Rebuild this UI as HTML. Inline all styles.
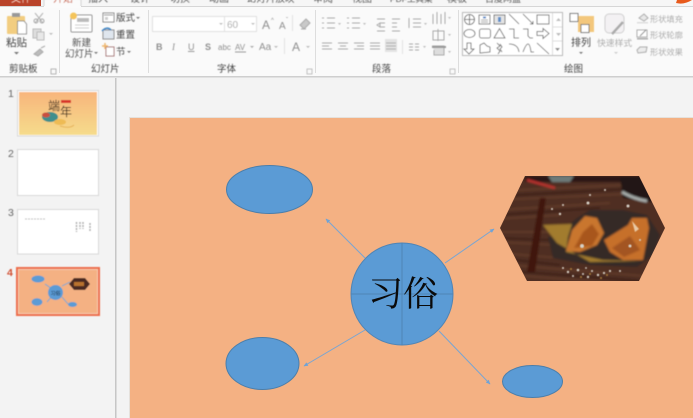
<!DOCTYPE html>
<html><head><meta charset="utf-8"><style>
html,body{margin:0;padding:0;width:693px;height:418px;overflow:hidden;background:#f3f3f3}
svg{display:block}
text{font-family:"Liberation Sans","Noto Sans CJK SC",sans-serif;fill:#5a5a5a;font-size:10px}
.g{fill:#8f8f8f}
.lg{fill:#adadad}
.i{fill:none;stroke:#a5a5a5;stroke-width:1}
.s{fill:none;stroke:#555;stroke-width:.8}
</style></head><body>
<svg width="693" height="418" viewBox="0 0 693 418" xmlns="http://www.w3.org/2000/svg">
<defs>
<clipPath id="hex"><polygon points="500,228 525,176 639,176 665,228 639,281 527,281"/></clipPath>
<linearGradient id="th" x1="0" y1="0" x2="0" y2="1"><stop offset="0" stop-color="#f8b57c"/><stop offset="1" stop-color="#f6dc8c"/></linearGradient>
<marker id="a" markerWidth="5" markerHeight="5" refX="4" refY="2.500" orient="auto"><path d="M0 0.500L4.500 2.500L0 4.500Z" fill="#6fa3d6"/></marker>
<filter id="b"><feGaussianBlur stdDeviation="0.45"/></filter>
<filter id="b2"><feGaussianBlur stdDeviation="1"/></filter>
<filter id="b3"><feGaussianBlur stdDeviation="0.4"/></filter>
</defs>

<rect width="693" height="418" fill="#f3f3f3"/>
<!-- top tabs -->
<rect width="693" height="7" fill="#f6f6f6"/>
<rect x="0" y="0" width="41" height="7" fill="#b9432a"/>
<g filter="url(#b)">
<text x="11" y="2" style="fill:#f6d9cf">文件</text>
<rect x="44" y="-1" width="37" height="9" fill="#fbfbfb" stroke="#d2d2d2"/>
<text x="53" y="2" style="fill:#c8502f">开始</text>
<text x="88" y="2">插入</text><text x="130" y="2">设计</text><text x="170" y="2">切换</text><text x="209" y="2">动画</text>
<text x="247" y="2" style="font-size:9.500px">幻灯片放映</text><text x="313" y="2">审阅</text><text x="352" y="2">视图</text>
<text x="390" y="2" style="font-size:8.500px">PDF工具集</text><text x="447" y="2">模板</text><text x="485" y="2" style="font-size:9px">百度网盘</text>
</g>
<path d="M676 3Q684 5 692 0L684 0L677 0Z" fill="#e85a1c"/>
<!-- ribbon -->
<rect x="0" y="7" width="693" height="69" fill="#fafafa"/>
<rect x="0" y="6" width="44" height="1" fill="#d6d6d6"/><rect x="81" y="6" width="612" height="1" fill="#d6d6d6"/>
<rect x="44" y="6" width="37" height="2" fill="#fbfbfb"/>
<rect x="0" y="76" width="693" height="1.500" fill="#cfcfcf"/>
<g fill="#dddddd"><rect x="59" y="10" width="1" height="63"/><rect x="148" y="10" width="1" height="63"/><rect x="315" y="10" width="1" height="63"/><rect x="458" y="10" width="1" height="63"/></g>

<g filter="url(#b)">
<!-- clipboard -->
<rect x="7" y="16" width="18" height="18" rx="1" fill="#f2cd80"/>
<rect x="12" y="13" width="8" height="4" fill="#999"/>
<path d="M17.500 21H24L26.500 24V34H17.500Z" fill="#fff" stroke="#777" stroke-width=".8"/>
<text x="6" y="46" style="font-size:10.500px;fill:#444">粘贴</text>
<path d="M14 52h5l-2.500 2.500Z" fill="#777"/>
<path d="M35 13L43 23M43 13L35 23" stroke="#aaa" fill="none"/><circle cx="36" cy="21" r="2" class="i"/><circle cx="42" cy="21" r="2" class="i"/>
<rect x="33" y="29" width="8" height="9" fill="#ddd" stroke="#bbb"/><rect x="37" y="32" width="7" height="8" fill="#e8e8e8" stroke="#bbb"/><path d="M49 33h4l-2 2Z" fill="#bbb"/>
<path d="M34 54L40 49L43 52L38 56ZM41 48L45 46" stroke="#aaa" fill="#bbb"/>
<text x="9" y="72" style="font-size:9.500px;fill:#444">剪贴板</text>
<rect x="51" y="69" width="5" height="5" fill="none" stroke="#999" stroke-width=".7"/>

<!-- slides group -->
<rect x="71" y="15" width="21" height="17" rx="1" fill="#fff" stroke="#8f8f8f"/>
<rect x="77" y="18" width="12" height="4" fill="#bbb"/><path d="M75 25h14M75 28h14" stroke="#ccc"/>
<circle cx="73.500" cy="16" r="3.500" fill="#f4c45a"/>
<text x="72" y="46" style="font-size:9.500px;fill:#555">新建</text>
<text x="65" y="57" style="font-size:9.500px;fill:#555">幻灯片</text><path d="M94 52h4l-2 2Z" fill="#777"/>
<rect x="103" y="13" width="11" height="9" fill="#fff" stroke="#8a8a8a"/><path d="M104 15h9" stroke="#8a8a8a"/><rect x="105" y="17" width="3" height="3" fill="#ccc"/>
<text x="116" y="21" style="font-size:9.500px;fill:#444">版式</text><path d="M136 17h4l-2 2Z" fill="#777"/>
<rect x="103" y="30" width="11" height="9" fill="#dfe6ee" stroke="#8a8a8a"/><path d="M102 31Q107 26 111 30" stroke="#3f87c6" stroke-width="1.500" fill="none"/>
<text x="116" y="38" style="font-size:9.500px;fill:#444">重置</text>
<rect x="106" y="47" width="8" height="9" fill="#fff" stroke="#a77"/><path d="M102 46h6M105 43v6" stroke="#efb56c" stroke-width="1.500"/>
<text x="116" y="55" style="font-size:9.500px;fill:#444">节</text><path d="M127 51h4l-2 2Z" fill="#777"/>
<text x="91" y="72" style="font-size:9.500px;fill:#444">幻灯片</text>

<!-- font group -->
<rect x="152.500" y="16.500" width="72" height="15" fill="#fff" stroke="#e0e0e0"/>
<rect x="224.500" y="16.500" width="32" height="15" fill="#fff" stroke="#e0e0e0"/>
<path d="M219 23h4l-2 2ZM251 23h4l-2 2Z" fill="#bbb"/>
<text x="227" y="28" style="font-size:10px;fill:#aaa">60</text>
<text x="262" y="29" style="font-size:12px" class="g">A</text><text x="279" y="29" style="font-size:10px" class="g">A</text>
<text x="271" y="22" style="font-size:6px" class="g">^</text><text x="286" y="22" style="font-size:6px" class="g">ˇ</text>
<rect x="292" y="15" width="1" height="16" fill="#e2e2e2"/>
<path d="M300 25L306 19L310 23L304 29ZM306 29H301" stroke="#aaa" fill="#c9c9c9"/>
<text x="156" y="50" style="font-size:9px;font-weight:bold" class="g">B</text>
<text x="172" y="50" style="font-size:9px;font-style:italic;font-family:'Liberation Serif',serif" class="g">I</text>
<text x="188" y="50" style="font-size:9px;text-decoration:underline" class="g">U</text>
<text x="205" y="50" style="font-size:9px;font-weight:bold" class="g">S</text>
<text x="218" y="50" style="font-size:8px" class="g">abc</text>
<text x="235" y="50" style="font-size:8px" class="g">AV</text><path d="M235 52h11" stroke="#999"/><path d="M250 46h4l-2 2Z" fill="#aaa"/>
<text x="259" y="50" style="font-size:10px" class="g">Aa</text><path d="M274 46h4l-2 2Z" fill="#bbb"/>
<rect x="284" y="38" width="1" height="16" fill="#e2e2e2"/>
<text x="292" y="51" style="font-size:12px" class="g">A</text><path d="M306 46h4l-2 2Z" fill="#bbb"/>
<text x="217" y="72" style="font-size:9.500px;fill:#444">字体</text>
<rect x="307" y="69" width="5" height="5" fill="none" stroke="#aaa" stroke-width=".7"/>

<!-- paragraph -->
<g stroke="#aaa" fill="none">
<path d="M327 18h8M327 23h8M327 28h8M322 18h2M322 23h2M322 28h2"/>
<path d="M352 18h8M352 23h8M352 28h8M347 18h2M347 23h2M347 28h2"/>
<path d="M377 19h8M380 23h5M380 27h5M377 31h8M377 25l3-2v4Z"/>
<path d="M392 19h8M392 23h5M392 27h5M392 31h8"/>
<path d="M413 19h8M413 23h8M413 27h8M409 18v10"/>
<path d="M433 14v10M437 12v12M441 14v10M445 12v12"/>
<rect x="433" y="31" width="11" height="9"/><path d="M438 29v12"/>
<path d="M322 43h10M322 46h7M322 49h10"/><path d="M338 43h10M340 46h6M338 49h10"/><path d="M354 43h10M357 46h7M354 49h10"/><path d="M370 43h10M370 46h10M370 49h10"/>
</g>
<rect x="385" y="39" width="12" height="13" fill="#e3e3e3"/><path d="M386 43h10M386 46h10M386 49h10" stroke="#aaa"/>
<rect x="402" y="40" width="1" height="14" fill="#e2e2e2"/>
<path d="M409 44h4M415 44h4M409 47h4M415 47h4M409 50h4M415 50h4" stroke="#aaa"/>
<path d="M432 46h12v9h-10v-5" fill="#ddd" stroke="#aaa"/><path d="M432 47L446 47" stroke="#999" stroke-width="2"/>
<g fill="#bbb"><path d="M338 23h3l-1.500 2ZM363 23h3l-1.500 2ZM424 23h3l-1.500 2ZM448 17h3l-1.500 2ZM448 34h3l-1.500 2ZM423 46h3l-1.500 2ZM448 51h3l-1.500 2Z"/></g>
<text x="372" y="72" style="font-size:9.500px;fill:#444">段落</text>
<rect x="450" y="69" width="5" height="5" fill="none" stroke="#aaa" stroke-width=".7"/>

<!-- gallery -->
<rect x="462.500" y="12.500" width="100" height="43" fill="#fff" stroke="#b8b8b8"/>
<path d="M552.500 13V55M552.500 27H562M552.500 41H562" stroke="#dcdcdc"/>
<path d="M556 21h5l-2.500-3ZM556 33h5l-2.500 3Z" fill="#bbb"/><path d="M555 46h5M555 48h5l-2.500 3Z" fill="#888"/>
<g class="s">
<circle cx="469.500" cy="19.500" r="5"/><path d="M469.500 14.500v10M464.500 19.500h10"/>
<rect x="479" y="15" width="11" height="9"/><path d="M481 20h7M481 22h7" stroke="#888"/><rect x="483" y="16.500" width="3" height="2" fill="#5b8ec9" stroke="none"/>
<rect x="494" y="15" width="11" height="9" fill="#e4e4e4"/><rect x="498" y="17" width="3" height="5" fill="#5b8ec9" stroke="none"/>
<path d="M509 14L519 24M523 14L533 24M530 24h3v-3"/>
<rect x="537" y="15" width="12" height="9"/>
<ellipse cx="469.500" cy="33.500" rx="5.500" ry="4"/>
<rect x="479.500" y="29" width="11" height="9" rx="2"/>
<path d="M494 38L499.500 28.500L505 38Z"/>
<path d="M509 29h5v9h5"/><path d="M523 29h5v7l2 2h3"/>
<path d="M537 31.500h6v-3l6 5-6 5v-3h-6Z"/>
<path d="M467 43v6h-3l5 5 5-5h-3v-6Z"/>
<path d="M480 45l4-2 3 3 3 1 0 5-10 1Z"/>
<path d="M497 43l3 3-3 2 3 3-2 3M500 44l2 3-2 2 2 3"/>
<path d="M509 44q9 0 10 8"/><path d="M523 52q3-8 5-8t3 8h3"/><path d="M537 43L549 54"/>
</g>

<!-- arrange -->
<rect x="578" y="16" width="16" height="16" fill="#f3c77c"/>
<rect x="570" y="13.500" width="8" height="8" fill="#fff" stroke="#777"/>
<rect x="581" y="24.500" width="8" height="8" fill="#fff" stroke="#777"/>
<text x="571" y="46" style="font-size:10px;fill:#444">排列</text><path d="M579 52h4l-2 2Z" fill="#777"/>
<!-- quick styles -->
<rect x="605" y="14" width="19" height="19" rx="4" fill="#f3f1f3" stroke="#cfcfcf"/>
<path d="M612 34L623 22" stroke="#aaa" stroke-width="2.500"/>
<text x="597" y="46" style="font-size:8.800px" class="lg">快速样式</text><path d="M614 52h4l-2 2Z" fill="#ccc"/>
<!-- shape opts -->
<path d="M639 18l5-4 4 4-4 3Z" fill="#e8e8e8" stroke="#aaa"/><rect x="637" y="22" width="11" height="1.500" fill="#ddd"/>
<text x="650" y="22" style="font-size:8.200px" class="lg">形状填充</text>
<rect x="637" y="30" width="10" height="7" fill="#fff" stroke="#aaa"/><path d="M640 36l6-6" stroke="#888"/><rect x="637" y="38" width="11" height="1.500" fill="#aaa"/>
<text x="650" y="38" style="font-size:8.200px" class="lg">形状轮廓</text>
<path d="M637 50l3-3h7l-1 5-8 1Z" fill="#ececec" stroke="#aaa"/>
<text x="650" y="55" style="font-size:8.200px" class="lg">形状效果</text>
<text x="564" y="72" style="font-size:9.500px;fill:#444">绘图</text>
</g>

<!-- left panel -->
<rect x="115" y="78" width="1.500" height="340" fill="#c6c6c6"/>
<g filter="url(#b)">
<text x="8" y="97" style="font-size:10.500px;fill:#666">1</text>
<text x="8" y="157" style="font-size:10.500px;fill:#666">2</text>
<text x="8" y="216" style="font-size:10.500px;fill:#666">3</text>
<text x="7" y="276" style="font-size:10.500px;fill:#d04f33;font-weight:bold">4</text>
<!-- thumb 1 -->
<rect x="17.500" y="90.500" width="81" height="45.500" fill="#fff" stroke="#d8d8d8"/>
<rect x="19" y="92" width="78" height="43" fill="url(#th)"/>
<text x="48" y="110" style="font-size:12px;fill:#3a2a1e">端</text><text x="60" y="116" style="font-size:12px;fill:#3a2a1e">年</text>
<rect x="61" y="100" width="10" height="3" fill="#d8352a"/>
<ellipse cx="50" cy="117" rx="8" ry="5" fill="#3f8f8d"/><ellipse cx="46" cy="115" rx="4" ry="2.500" fill="#c9503f"/><ellipse cx="60" cy="122" rx="6" ry="3" fill="#eebb55"/>
<path d="M60 126q10 3 14-1" stroke="#e6b35a" fill="none"/>
<!-- thumb 2 -->
<rect x="17.500" y="149.500" width="81" height="46" fill="#fff" stroke="#d8d8d8"/>
<!-- thumb 3 -->
<rect x="17.500" y="209.500" width="81" height="44.500" fill="#fff" stroke="#d8d8d8"/>
<path d="M25 219h20" stroke="#bcbcbc" stroke-width="1" stroke-dasharray="2 1"/>
<path d="M76.500 222v10M80 222v7M83 222v7M90 223v8" stroke="#aaa" stroke-width="1.500" stroke-dasharray="2 1"/>
<!-- thumb 4 -->
<rect x="17" y="268" width="82" height="47" fill="#f4b183" stroke="#ed6d4c" stroke-width="2"/>
<rect x="18.500" y="269.500" width="79" height="44" fill="none" stroke="#f8d2b8" stroke-width=".8"/>
<path d="M45 284L58 293M62 286L70 282M47 302L52 296M62 297L68 304" stroke="#8ba8c8" stroke-width="1.200"/>
<ellipse cx="38" cy="279" rx="6.500" ry="3.500" fill="#5b9bd5"/><ellipse cx="37" cy="302" rx="5.500" ry="3.700" fill="#5b9bd5"/><ellipse cx="72.500" cy="304.500" rx="4.500" ry="2.500" fill="#5b9bd5"/>
<circle cx="55.500" cy="292.500" r="7.500" fill="#5b9bd5"/>
<text x="50.500" y="295" style="font-size:5px;fill:#123">习俗</text>
<polygon points="69,284 74,278 85,278 90,284 85,290 74,290" fill="#4b2c20"/><rect x="74" y="282" width="10" height="4" fill="#b9722e"/>
</g>

<!-- slide -->
<rect x="129" y="117" width="564" height="301" fill="#f4b183"/>
<path d="M129 117.500H693M129.500 117V418" stroke="#e5e1dc" stroke-width="1"/>
<ellipse cx="269.500" cy="189.500" rx="43" ry="24" fill="#5b9bd5" stroke="#4a7eab"/>
<ellipse cx="262.500" cy="363.500" rx="36.500" ry="26" fill="#5b9bd5" stroke="#4a7eab"/>
<ellipse cx="532.500" cy="381.500" rx="30" ry="16" fill="#5b9bd5" stroke="#4a7eab"/>
<g stroke="#76a5d4" stroke-width="1" fill="none">
<line x1="365" y1="258" x2="326" y2="219" marker-end="url(#a)"/>
<line x1="445" y1="263" x2="494" y2="229" marker-end="url(#a)"/>
<line x1="365" y1="330" x2="304" y2="366" marker-end="url(#a)"/>
<line x1="439" y1="331" x2="490" y2="384" marker-end="url(#a)"/>
</g>
<circle cx="402" cy="294" r="51" fill="#5b9bd5" stroke="#4f84b5"/>
<path d="M402 243V345M351 294H453" stroke="#4f84b5" stroke-width="1"/>
<text x="368" y="306" style="font-size:35px;fill:#0a0a0a;font-family:'Liberation Sans','Noto Serif CJK SC',serif">习俗</text>

<!-- photo -->
<g clip-path="url(#hex)">
<g filter="url(#b2)">
<rect x="498" y="174" width="170" height="110" fill="#4f2d20"/>
<g stroke="#6a4030" stroke-width="1.500" fill="none" opacity=".8">
<path d="M498 191L668 183M498 200L668 192M498 210L610 203M498 219L560 215M498 232L560 232M498 242L555 245M498 253L560 258M498 264L668 278M498 274L668 287"/>
</g>
<g stroke="#2e1710" stroke-width="1.200" fill="none" opacity=".8"><path d="M498 196L668 187M498 215L600 208M498 238L550 240M498 258L560 265M498 270L668 283"/></g>
<path d="M525 176h120v6h-120Z" fill="#2b1913"/>
<path d="M527 180L555 188" stroke="#b8322f" stroke-width="2.500"/>
<path d="M548 176h26l-4 6h-18Z" fill="#6d7a78"/>
<path d="M620 177h27l6 25-30-4Z" fill="#241814"/><path d="M622 192q12 7 25 9" stroke="#aab0ae" stroke-width="3" fill="none"/>
<polygon points="540,198 546,198 535,272 527,272" fill="#40190f"/>
<path d="M548 237L553 258L590 265L637 267L653 255L660 235L647 215L623 210L590 210L577 218L557 235Z" fill="#352a26"/>
<path d="M543 225L572 224L568 237L566 252L603 260L643 261L590 262L557 243Z" fill="#a27c2e"/>
<path d="M566 251L572 230L585 216L597 218L604 233L597 245L580 252Z" fill="#c9762f"/>
<path d="M574 248L583 232L592 224L599 234L592 246Z" fill="#a8561f"/>
<path d="M604 240L628 225L632 218L647 218L649 228L643 260L623 260L610 252Z" fill="#c66f2b"/>
<path d="M612 248L630 236L640 250L624 257Z" fill="#a35420"/>
</g>
<g filter="url(#b3)">
<path d="M632 221l7 8-4 3Z" fill="#e9c9a4"/>
<g fill="#d6d0c6"><circle cx="552" cy="209" r="1"/><circle cx="560" cy="214" r="1.200"/><circle cx="563" cy="205" r="1"/><circle cx="588" cy="203" r="1.500"/><circle cx="590" cy="195" r="1"/><circle cx="628" cy="206" r="1.500"/><circle cx="582" cy="246" r="2"/><circle cx="605" cy="190" r="1"/><circle cx="630" cy="246" r="1.500"/><circle cx="640" cy="240" r="1"/><circle cx="563" cy="268" r="1"/><circle cx="568" cy="272" r="1.200"/><circle cx="573" cy="276" r="1"/><circle cx="578" cy="270" r="1.300"/><circle cx="583" cy="274" r="1"/><circle cx="588" cy="277" r="1.200"/><circle cx="592" cy="271" r="1"/><circle cx="598" cy="275" r="1.200"/><circle cx="604" cy="273" r="1.100"/><circle cx="610" cy="271" r="1.100"/><circle cx="620" cy="271" r="1"/><circle cx="586" cy="268" r=".9"/></g>
<g fill="#a97a3a"><circle cx="571" cy="269" r="1"/><circle cx="581" cy="277" r="1"/><circle cx="590" cy="274" r="1"/><circle cx="601" cy="278" r="1"/><circle cx="607" cy="275" r="1"/></g>
</g>
</g>
</svg>
</body></html>
